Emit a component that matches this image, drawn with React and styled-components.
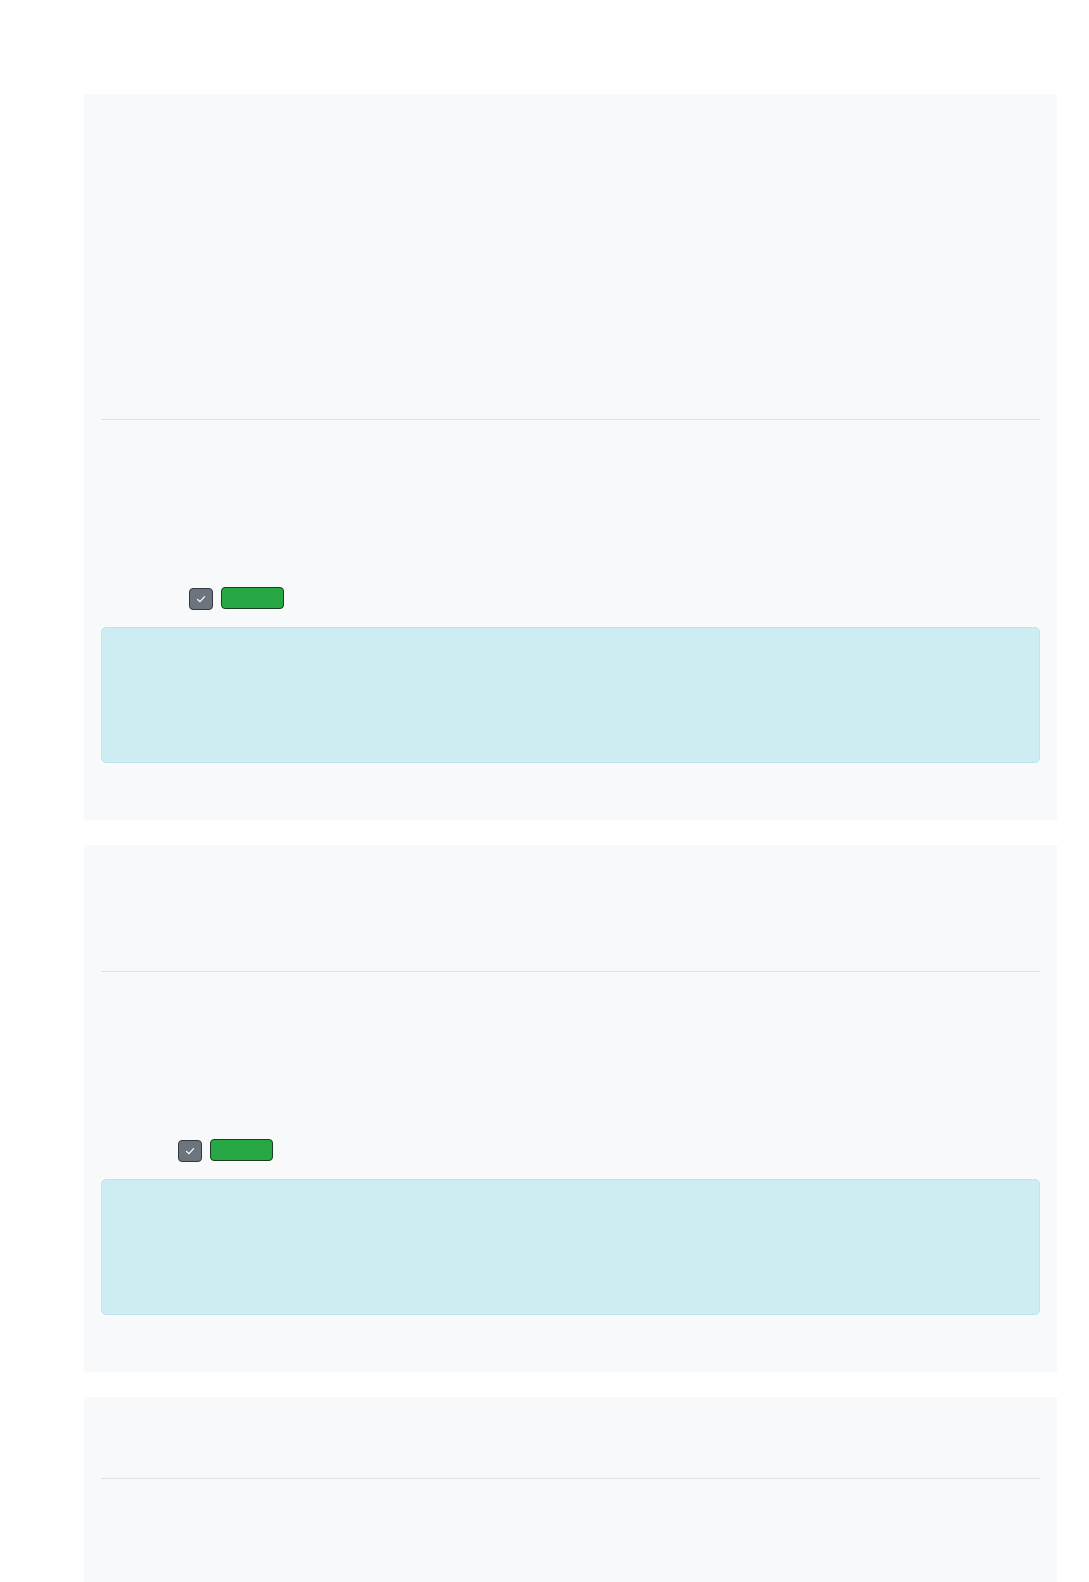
import React from "react";
import styled, { createGlobalStyle } from "styled-components";

const Global = createGlobalStyle`
  html, body { margin: 0; padding: 0; background: #ffffff; }
  body { font-family: "Liberation Sans", Arial, sans-serif; }
`;

const Page = styled.div`
  box-sizing: border-box;
  padding: 94px 32px 0 84px;
  display: flex;
  flex-direction: column;
  gap: 25px;
  width: 1089px;
  height: 1582px;
  overflow: hidden;
`;

const Panel = styled.section`
  background: #f8f9fa;
  padding: 0 17px;
  display: flex;
  flex-direction: column;
  flex-shrink: 0;
  height: ${(p) => p.$h}px;
`;

const Space = styled.div`
  height: ${(p) => p.$h}px;
  flex-shrink: 0;
`;

const Divider = styled.hr`
  margin: 0;
  border: 0;
  border-top: 1px solid #dee2e6;
  height: 0;
  flex-shrink: 0;
`;

const ActionRow = styled.div`
  display: flex;
  align-items: center;
  gap: 8px;
  height: 22px;
  padding-left: ${(p) => p.$indent}px;
`;

const Check = styled.span`
  width: 22px;
  height: 20px;
  box-sizing: content-box;
  border: 1px solid #343a40;
  border-radius: 4px;
  background: #6c757d;
  display: inline-flex;
  align-items: center;
  justify-content: center;
  margin-top: 2px;
`;

const GreenButton = styled.button`
  width: 63px;
  height: 22px;
  border: 1px solid #1c3d24;
  border-radius: 4px;
  background: #28a745;
  padding: 0;
`;

const Alert = styled.div`
  height: 136px;
  box-sizing: border-box;
  background: #cdedf2;
  border: 1px solid #bee5eb;
  border-radius: 5px;
  flex-shrink: 0;
`;

const CheckIcon = () => (
  <svg width="12" height="12" viewBox="0 0 12 12" fill="none">
    <path d="M2.5 6.4 L5 8.7 L9.6 3.6" stroke="#fff" strokeWidth="1.2" strokeLinecap="round" strokeLinejoin="round" />
  </svg>
);

const Section = ({ h, top, indent }) => (
  <Panel $h={h}>
    <Space $h={top} />
    <Divider />
    <Space $h={167} />
    <ActionRow $indent={indent}>
      <Check><CheckIcon /></Check>
      <GreenButton aria-label="ok" />
    </ActionRow>
    <Space $h={18} />
    <Alert />
  </Panel>
);

export default function App() {
  return (
    <>
      <Global />
      <Page>
        <Section h={726} top={325} indent={88} />
        <Section h={527} top={126} indent={77} />
        <Panel $h={400}>
          <Space $h={81} />
          <Divider />
        </Panel>
      </Page>
    </>
  );
}
